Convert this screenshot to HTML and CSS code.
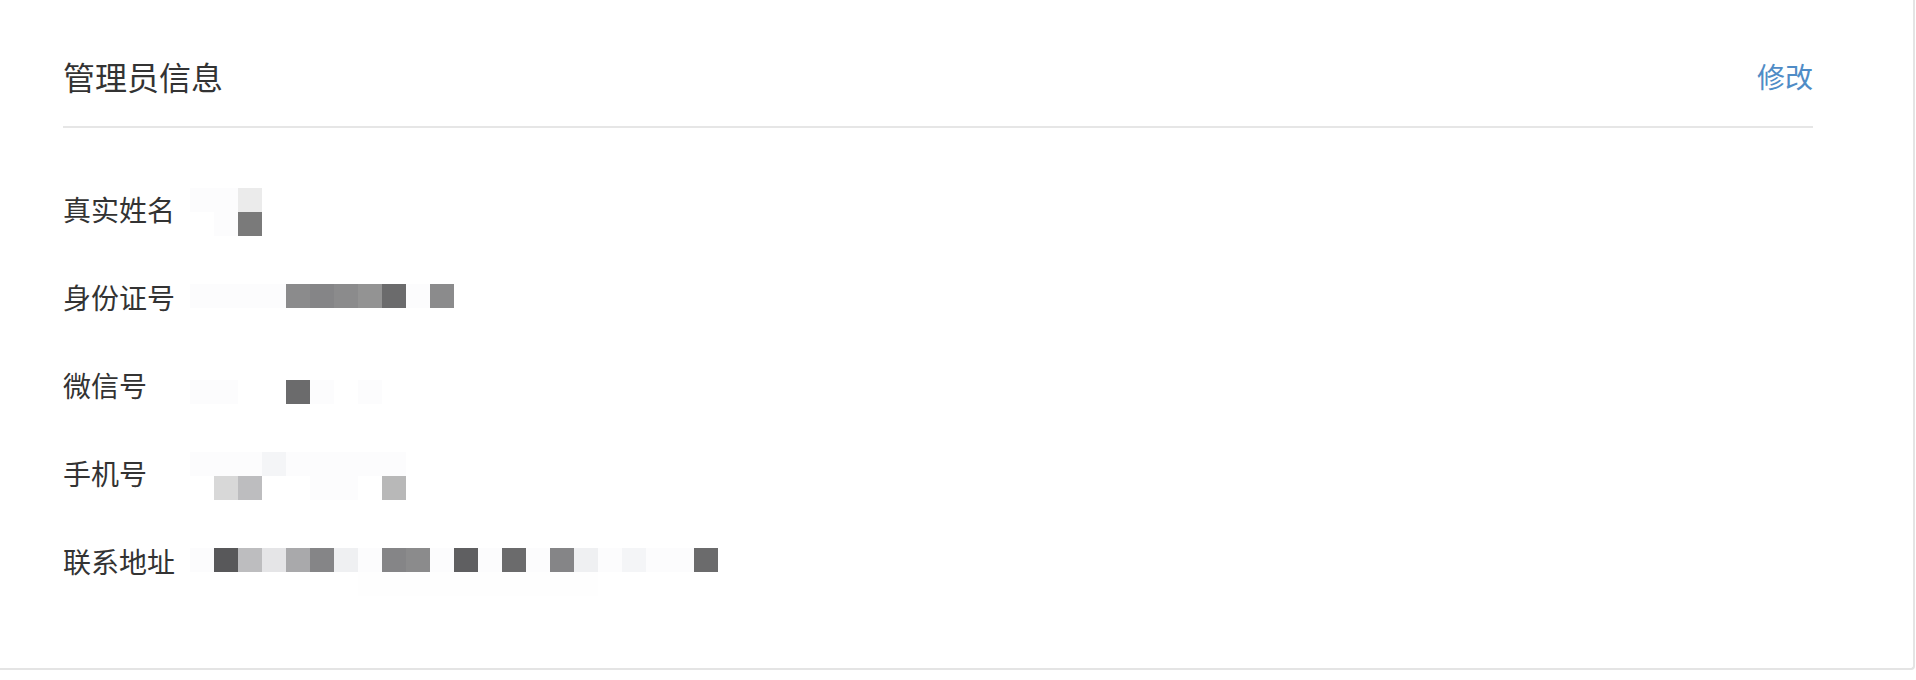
FILE: index.html
```html
<!DOCTYPE html>
<html lang="zh-CN">
<head>
<meta charset="utf-8">
<title>管理员信息</title>
<link rel="stylesheet" href="styles.css">
</head>
<body>
<section class="card">
  <header class="card-head">
    <h2 class="card-title">管理员信息</h2>
    <a class="edit-link" href="#">修改</a>
  </header>
  <dl class="info-list">
    <div class="info-row">
      <dt class="info-label">真实姓名</dt>
      <dd class="mosaic off-21">
        <div class="cells"><span class="s-f"></span><span class="s-f"></span><span class="s-e"></span></div>
        <div class="cells"><span></span><span class="s-f"></span><span class="s-7"></span></div>
      </dd>
    </div>
    <div class="info-row">
      <dt class="info-label">身份证号</dt>
      <dd class="mosaic off-29">
        <div class="cells"><span class="s-f"></span><span class="s-f"></span><span class="s-f"></span><span class="s-f"></span><span class="s-8"></span><span class="s-85"></span><span class="s-8"></span><span class="s-9"></span><span class="s-6"></span><span class="s-f"></span><span class="s-8"></span></div>
      </dd>
    </div>
    <div class="info-row">
      <dt class="info-label">微信号</dt>
      <dd class="mosaic off-37">
        <div class="cells"><span class="s-f"></span><span class="s-f"></span><span></span><span></span><span class="s-6"></span><span class="s-f"></span><span></span><span class="s-f"></span></div>
      </dd>
    </div>
    <div class="info-row">
      <dt class="info-label">手机号</dt>
      <dd class="mosaic off-21">
        <div class="cells"><span class="s-f"></span><span class="s-f"></span><span class="s-f"></span><span class="s-f2"></span><span class="s-f"></span><span class="s-f"></span><span class="s-f"></span><span class="s-f"></span><span class="s-f"></span></div>
        <div class="cells"><span></span><span class="s-d"></span><span class="s-c"></span><span></span><span></span><span class="s-f"></span><span class="s-f"></span><span></span><span class="s-b"></span></div>
      </dd>
    </div>
    <div class="info-row">
      <dt class="info-label">联系地址</dt>
      <dd class="mosaic off-29">
        <div class="cells"><span class="s-f"></span><span class="s-5"></span><span class="s-c"></span><span class="s-e2"></span><span class="s-a"></span><span class="s-85"></span><span class="s-f3"></span><span class="s-f"></span><span class="s-85"></span><span class="s-8"></span><span class="s-f"></span><span class="s-5b"></span><span class="s-f"></span><span class="s-6"></span><span class="s-f"></span><span class="s-85"></span><span class="s-f3"></span><span class="s-f"></span><span class="s-f2"></span><span class="s-f"></span><span class="s-f"></span><span class="s-6"></span></div>
        <div class="cells"><span></span><span></span><span></span><span></span><span></span><span></span><span></span><span class="s-g"></span><span class="s-g"></span><span class="s-g"></span><span class="s-g"></span><span class="s-g"></span><span class="s-g"></span><span class="s-g"></span><span class="s-g"></span><span class="s-g"></span><span class="s-g"></span></div>
      </dd>
    </div>
  </dl>
</section>
</body>
</html>
```

FILE: styles.css
```css
* {
  box-sizing: border-box;
}

html, body {
  margin: 0;
  padding: 0;
  background: #ffffff;
}

body {
  width: 1916px;
  height: 680px;
  overflow: hidden;
  font-family: "Noto Sans CJK SC", "Noto Sans", sans-serif;
  color: #333333;
}

.card {
  width: 1915px;
  height: 670px;
  background: #ffffff;
  border-right: 2px solid #e4e4e4;
  border-bottom: 2px solid #e4e4e4;
  border-bottom-right-radius: 4px;
  padding: 0 100px 0 63px;
}

.card-head {
  display: flex;
  align-items: center;
  justify-content: space-between;
  height: 128px;
  padding-top: 26px;
  padding-bottom: 0;
  border-bottom: 2px solid #e6e6e6;
}

.card-title {
  margin: 0;
  font-size: 32px;
  font-weight: 400;
  line-height: 40px;
  color: #333333;
}

.edit-link {
  font-size: 28px;
  line-height: 40px;
  color: #4f8cc6;
  text-decoration: none;
}

.info-list {
  margin: 0;
  padding: 39px 0 0 0;
}

.info-row {
  display: flex;
  align-items: center;
  height: 88px;
}

.info-label {
  width: 127px;
  flex: none;
  margin-bottom: 4px;
  font-size: 28px;
  line-height: 40px;
  color: #333333;
}

.mosaic {
  margin: 0;
  align-self: flex-start;
  display: flex;
  flex-direction: column;
}

.off-21 { margin-top: 21px; }
.off-29 { margin-top: 29px; }
.off-37 { margin-top: 37px; }

.cells {
  display: flex;
}

.cells span {
  width: 24px;
  height: 24px;
  flex: none;
}

.s-f  { background: #fcfcfd; }
.s-f2 { background: #f4f5f7; }
.s-f3 { background: #eff0f2; }
.s-g  { background: #fefefe; }
.s-e  { background: #ebebeb; }
.s-e2 { background: #e5e5e7; }
.s-d  { background: #d8d8d8; }
.s-c  { background: #bdbdbf; }
.s-b  { background: #b8b8b8; }
.s-a  { background: #a9a9ab; }
.s-9  { background: #939393; }
.s-8  { background: #8b8b8c; }
.s-85 { background: #858587; }
.s-7  { background: #7a7a7a; }
.s-6  { background: #6b6b6c; }
.s-5b { background: #5f5f61; }
.s-5  { background: #58585a; }
```
